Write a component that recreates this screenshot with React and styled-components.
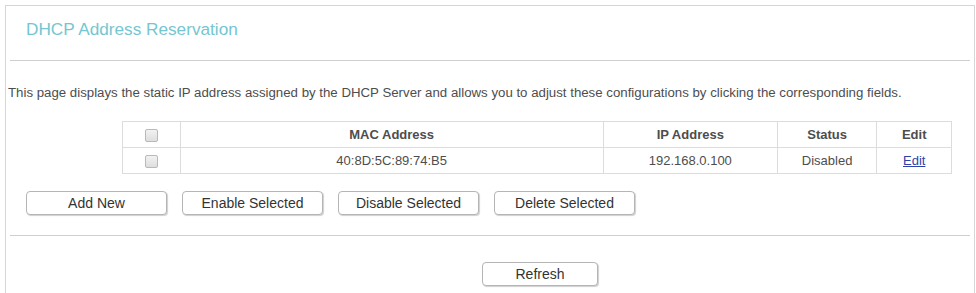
import styled, { createGlobalStyle } from "styled-components"

const GlobalStyle = createGlobalStyle`
    html, body {
        margin: 0;
        padding: 0;
        background: #ffffff;
        font-family: "Liberation Sans", Arial, sans-serif;
        color: #4d4d4d;
    }
`

const Panel = styled.div`
    margin: 5px 1px 0 5px;
    border: 1px solid #d6d6d6;
    border-bottom: none;
    height: 300px;
    box-sizing: border-box;
`

const Title = styled.h2`
    margin: 0;
    padding: 13px 20px 0 20px;
    height: 41px;
    box-sizing: border-box;
    font-size: 17.2px;
    line-height: 20px;
    font-weight: normal;
    color: #74c6d1;
`

const Divider = styled.div`
    margin: ${(p) => p.$top || 13}px 4px 0 4px;
    border-top: 1px solid #cfcfcf;
`

const Description = styled.p`
    margin: 25px 0 0 2px;
    font-size: 13.25px;
    line-height: 14px;
    color: #4d4d4d;
`

const Table = styled.table`
    margin: 21px 0 0 116px;
    width: 830px;
    border-collapse: collapse;
    font-size: 13px;
    color: #4d4d4d;
`

const Cell = styled.td`
    border: 1px solid #dcdcdc;
    height: 25px;
    padding: 0;
    text-align: center;
    width: ${(p) => p.$w}px;
    font-weight: ${(p) => (p.$head ? "bold" : "normal")};
`

const Check = styled.span`
    display: inline-block;
    width: 11px;
    height: 11px;
    border: 1px solid #b9b9b9;
    border-radius: 2px;
    background: linear-gradient(#f2f2f2, #dedede);
    vertical-align: middle;
`

const EditLink = styled.a`
    color: #2f42a8;
    text-decoration: underline;
    cursor: pointer;
`

const ButtonRow = styled.div`
    display: flex;
    gap: 15px;
    margin: 17px 0 0 20px;
`

const Button = styled.button`
    width: ${(p) => p.$w || 141}px;
    height: 24px;
    padding: 0;
    background: #ffffff;
    border: 1px solid #b5b5b5;
    border-radius: 4px;
    box-shadow: 1px 1px 1px #d0d0d0;
    font-family: "Liberation Sans", Arial, sans-serif;
    font-size: 14px;
    color: #333333;
    cursor: pointer;
`

const RefreshRow = styled.div`
    margin: 26px 0 0 476px;
`

const columns = [
    { w: 57, head: "" },
    { w: 425, head: "MAC Address" },
    { w: 174, head: "IP Address" },
    { w: 99, head: "Status" },
    { w: 74, head: "Edit" },
]

const rows = [{ mac: "40:8D:5C:89:74:B5", ip: "192.168.0.100", status: "Disabled" }]

const App = () => {
    return (
        <>
            <GlobalStyle />
            <Panel>
                <Title>DHCP Address Reservation</Title>
                <Divider />
                <Description>
                    This page displays the static IP address assigned by the DHCP Server and allows you to adjust these configurations by clicking the corresponding fields.
                </Description>
                <Table>
                    <tbody>
                        <tr>
                            {columns.map((c, i) => (
                                <Cell key={i} $w={c.w} $head>
                                    {i === 0 ? <Check /> : c.head}
                                </Cell>
                            ))}
                        </tr>
                        {rows.map((r) => (
                            <tr key={r.mac}>
                                <Cell $w={57}><Check /></Cell>
                                <Cell $w={425}>{r.mac}</Cell>
                                <Cell $w={174}>{r.ip}</Cell>
                                <Cell $w={99}>{r.status}</Cell>
                                <Cell $w={74}><EditLink>Edit</EditLink></Cell>
                            </tr>
                        ))}
                    </tbody>
                </Table>
                <ButtonRow>
                    <Button>Add New</Button>
                    <Button>Enable Selected</Button>
                    <Button>Disable Selected</Button>
                    <Button>Delete Selected</Button>
                </ButtonRow>
                <Divider $top={20} />
                <RefreshRow>
                    <Button $w={116}>Refresh</Button>
                </RefreshRow>
            </Panel>
        </>
    )
}

export default App
